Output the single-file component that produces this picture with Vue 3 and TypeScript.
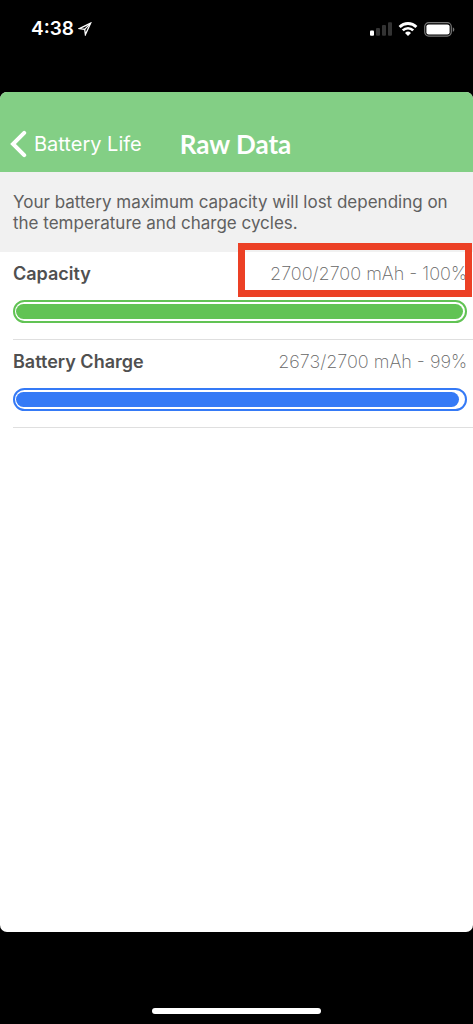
<script setup lang="ts">
interface Reading {
  id: string
  label: string
  current: number
  max: number
  tone: 'green' | 'blue'
  highlighted: boolean
}

const readings: Reading[] = [
  { id: 'capacity', label: 'Capacity', current: 2700, max: 2700, tone: 'green', highlighted: true },
  { id: 'charge', label: 'Battery Charge', current: 2673, max: 2700, tone: 'blue', highlighted: false },
]

const percent = (r: Reading): number => Math.round((r.current / r.max) * 100)
</script>

<template>
  <div class="phone">
    <div class="status">
      <div class="clock">
        <span>4:38</span>
        <svg class="location" viewBox="0 0 14 14" width="14" height="14" aria-hidden="true">
          <path d="M12.6 1.2 1.4 6.6 6.7 7.3 7.4 12.6Z" fill="none" stroke="#fff" stroke-width="1.3" stroke-linejoin="miter" />
          <path d="M12.6 1.2 6.7 7.3" stroke="#fff" stroke-width="1.2" />
        </svg>
      </div>
      <div class="indicators">
        <svg viewBox="0 0 22 14" width="22" height="14" aria-hidden="true">
          <rect x="0" y="8.4" width="4" height="5.4" rx="1" fill="#fff" />
          <rect x="6" y="6" width="4" height="7.8" rx="1" fill="#333" />
          <rect x="12" y="3" width="4" height="10.8" rx="1" fill="#333" />
          <rect x="18" y="0.2" width="4" height="13.6" rx="1" fill="#333" />
        </svg>
        <svg viewBox="0 0 20 14" width="20" height="14" aria-hidden="true">
          <path d="M1.6 5A11.8 11.8 0 0 1 18.4 5" fill="none" stroke="#fff" stroke-width="2.8" />
          <path d="M4.8 8.4A7.2 7.2 0 0 1 15.2 8.4" fill="none" stroke="#fff" stroke-width="2.6" />
          <path d="M10 14 7 10.9A4.4 4.4 0 0 1 13 10.9Z" fill="#fff" />
        </svg>
        <svg viewBox="0 0 31 15" width="31" height="15" aria-hidden="true">
          <rect x="0.7" y="0.7" width="26.6" height="13.4" rx="4" fill="none" stroke="#777" stroke-width="1.2" />
          <rect x="2.4" y="2.4" width="23.2" height="10" rx="2.2" fill="#fff" />
          <path d="M28.8 5.2C30.8 6 30.8 9 28.8 9.8Z" fill="#777" />
        </svg>
      </div>
    </div>

    <main class="sheet">
      <header class="bar">
        <button class="back" type="button">
          <svg viewBox="0 0 17 28" width="17" height="28" aria-hidden="true">
            <path d="M14.2 2.8 3 14 14.2 25.2" fill="none" stroke="#fff" stroke-width="4" stroke-linecap="round" />
          </svg>
          <span>Battery Life</span>
        </button>
        <h1>Raw Data</h1>
      </header>

      <p class="notice">Your battery maximum capacity will lost depending on the temperature and charge cycles.</p>

      <section v-for="r in readings" :key="r.id" class="reading">
        <div class="line">
          <h2 :id="r.id">{{ r.label }}</h2>
          <span class="value">{{ r.current }}/{{ r.max }} mAh - {{ percent(r) }}%</span>
        </div>
        <div
          class="meter"
          :class="r.tone"
          role="progressbar"
          :aria-labelledby="r.id"
          :aria-valuenow="percent(r)"
          aria-valuemin="0"
          aria-valuemax="100"
        >
          <div class="fill" :style="{ width: percent(r) + '%' }"></div>
        </div>
        <div v-if="r.highlighted" class="marker" aria-hidden="true"></div>
      </section>
    </main>

    <div class="home"><span class="pill"></span></div>
  </div>
</template>

<style>
body {
  background: #000;
}
</style>

<style scoped>
.phone {
  display: flex;
  flex-direction: column;
  min-height: 100vh;
  background: #000;
  font-family: Inter, "Liberation Sans", sans-serif;
}
.status {
  display: flex;
  justify-content: space-between;
  align-items: flex-start;
  box-sizing: border-box;
  height: 92px;
  padding: 19px 18px 0 31px;
}
.clock {
  display: flex;
  align-items: center;
  gap: 4px;
  color: #fff;
  font-size: 19px;
  font-weight: 600;
  line-height: 20px;
}
.indicators {
  display: flex;
  align-items: center;
  gap: 6px;
  height: 20px;
}
.sheet {
  flex: 1;
  overflow: hidden;
  border-radius: 7px;
  background: #fff;
}
.bar {
  display: flex;
  align-items: center;
  gap: 38px;
  height: 56px;
  padding: 24px 10px 0;
  background: #83cf85;
  color: #fff;
}
.back {
  display: flex;
  align-items: center;
  gap: 7px;
  padding: 0;
  border: 0;
  background: none;
  color: #fff;
  font: 400 20px/28px Inter, sans-serif;
  cursor: pointer;
}
h1 {
  margin: 0;
  font: 700 26px/28px Lato, sans-serif;
}
.notice {
  box-sizing: border-box;
  min-height: 80px;
  margin: 0;
  padding: 20px 13px 18px;
  background: #f1f1f1;
  color: #606060;
  font-size: 17px;
  line-height: 21px;
}
.reading {
  position: relative;
  margin-left: 13px;
  padding: 9px 6px 16px 0;
  border-bottom: 1px solid #dfdfdf;
}
.line {
  display: flex;
  justify-content: space-between;
  align-items: center;
  height: 26px;
  margin-bottom: 13px;
}
h2 {
  margin: 0;
  color: #505050;
  font: 600 18px/26px Inter, "Liberation Sans", sans-serif;
}
.value {
  color: #666;
  font-size: 18px;
  font-weight: 200;
  line-height: 26px;
}
.meter {
  box-sizing: border-box;
  height: 23px;
  padding: 2px 2px 2px 1px;
  border: 2px solid;
  border-radius: 12px;
}
.fill {
  height: 15px;
  border-radius: 8px;
}
.green {
  border-color: #61c354;
}
.green .fill {
  background: #61c354;
}
.blue {
  border-color: #357af6;
}
.blue .fill {
  background: #357af6;
}
.marker {
  position: absolute;
  top: -9px;
  right: 1px;
  box-sizing: border-box;
  width: 234px;
  height: 54px;
  border: 7px solid #ec4025;
}
.home {
  display: flex;
  justify-content: center;
  align-items: flex-end;
  box-sizing: border-box;
  height: 92px;
  padding-bottom: 10px;
}
.pill {
  width: 169px;
  height: 6px;
  border-radius: 3px;
  background: #fff;
}
</style>
